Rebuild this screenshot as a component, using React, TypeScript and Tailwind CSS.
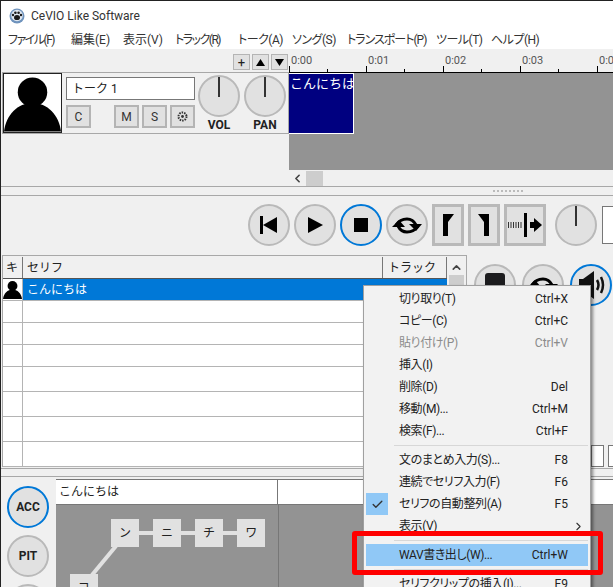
import { ChevronRight, ChevronLeft, ChevronUp, Check } from "lucide-react"
import type { ReactNode } from "react"

const menuBar = [
    { label: "ファイル(F)", width: "w-[63px]", tight: "tracking-[-1.5px]" },
    { label: "編集(E)", width: "w-[52px]", tight: "" },
    { label: "表示(V)", width: "w-[52px]", tight: "" },
    { label: "トラック(R)", width: "w-[63px]", tight: "tracking-[-1.5px]" },
    { label: "トーク(A)", width: "w-[54px]", tight: "tracking-[-0.5px]" },
    { label: "ソング(S)", width: "w-[55px]", tight: "tracking-[-0.5px]" },
    { label: "トランスポート(P)", width: "w-[89px]", tight: "tracking-[-1px]" },
    { label: "ツール(T)", width: "w-[55px]", tight: "tracking-[-0.5px]" },
    { label: "ヘルプ(H)", width: "w-[60px]", tight: "tracking-[-0.5px]" },
]

const rowHeights = ["h-[22px]", "h-[22px]", "h-[22px]", "h-[25px]", "h-[25px]", "h-[25px]", "h-[25px]"]

function Knob() {
    return (
        <div className="flex h-[42px] w-[42px] shrink-0 justify-center rounded-full border-2 border-[#b9b9b9] bg-[#e1e1e1]">
            <div className="h-[20px] w-[2px] bg-[#333]" />
        </div>
    )
}

function RoundButton({ active = false, children }: { active?: boolean; children: ReactNode }) {
    return (
        <div className={`flex h-[42px] w-[42px] shrink-0 items-center justify-center rounded-full border-2 bg-[#e1e1e1] ${active ? 'border-[#0078d7]' : 'border-[#b9b9b9]'}`}>
            {children}
        </div>
    )
}

function LoopIcon() {
    return (
        <svg width="42" height="42" viewBox="0 0 42 42" className="shrink-0">
            <path d="M10 21 Q14 15 21 15 Q27 15 30 21" fill="none" stroke="#000" strokeWidth="3" />
            <polygon points="23,20 36,20 30,27" fill="#000" />
            <path d="M32 22 Q28 28 21 28 Q15 28 12 22" fill="none" stroke="#000" strokeWidth="3" />
            <polygon points="6,23 19,23 13,16" fill="#000" />
        </svg>
    )
}

function SmallButton({ className = "", children }: { className?: string; children: ReactNode }) {
    return (
        <div className={`flex h-[23px] w-[25px] items-center justify-center border-2 border-[#b4b4b4] bg-[#e1e1e1] text-[12px] text-[#333] ${className}`}>
            {children}
        </div>
    )
}

function SquareButton({ className = "w-[32px]", children }: { className?: string; children: ReactNode }) {
    return (
        <div className={`flex h-[42px] shrink-0 items-center justify-center border-[3px] border-[#b9b9b9] bg-[#e1e1e1] ${className}`}>
            {children}
        </div>
    )
}

function MenuItem({ label, keys, disabled = false, highlight = false, checked = false, arrow = false }: { label: string; keys?: string; disabled?: boolean; highlight?: boolean; checked?: boolean; arrow?: boolean }) {
    return (
        <div className={`relative flex h-[22px] shrink-0 items-center justify-between pl-[33px] pr-[20px] text-[12px] ${highlight ? 'bg-[#90c8f6]' : ''} ${disabled ? 'text-[#8b8b8b]' : 'text-[#222]'}`}>
            {checked && (
                <div className="absolute left-0 top-0 flex h-[22px] w-[22px] items-center justify-center bg-[#90c8f6]">
                    <Check size={13} strokeWidth={2.5} className="text-[#333]" />
                </div>
            )}
            <span className="tracking-[-0.4px]">{label}</span>
            {keys && <span>{keys}</span>}
            {arrow && <ChevronRight size={13} className="absolute right-[3px] top-[5px] text-[#333]" />}
        </div>
    )
}

function MenuSeparator() {
    return (
        <div className="flex h-[7px] shrink-0 items-center pl-[28px]">
            <div className="h-[1px] w-full bg-[#d7d7d7]" />
        </div>
    )
}

function Person() {
    return (
        <svg viewBox="0 0 58 58" className="h-full w-full">
            <circle cx="29" cy="18" r="15" fill="#000" />
            <path d="M0 58 C2 41 14 29 29 29 C44 29 56 41 58 58 Z" fill="#000" />
        </svg>
    )
}

export default function App() {
    return (
        <div className="relative flex h-[587px] w-[613px] flex-col overflow-hidden border-l border-t border-[#222] bg-[#f0f0f0] font-['Roboto','Noto_Sans_CJK_JP',sans-serif] text-[#222] [font-feature-settings:'palt']">
            {/* title bar */}
            <div className="flex h-[29px] shrink-0 items-center gap-[6px] bg-white pl-[8px] text-[12px] text-[#333]">
                <svg width="16" height="16" viewBox="0 0 16 16">
                    <circle cx="8" cy="8" r="7.5" fill="#6f93bd" />
                    <circle cx="8" cy="7.5" r="5.8" fill="#dfe7f0" />
                    <ellipse cx="8" cy="9.5" rx="3" ry="2.6" fill="#1b1b1b" />
                    <circle cx="4" cy="7" r="1.2" fill="#1b1b1b" />
                    <circle cx="6.4" cy="4.8" r="1.3" fill="#1b1b1b" />
                    <circle cx="9.6" cy="4.8" r="1.3" fill="#1b1b1b" />
                    <circle cx="12" cy="7" r="1.2" fill="#1b1b1b" />
                </svg>
                <span>CeVIO Like Software</span>
            </div>

            {/* menu bar */}
            <div className="flex h-[19px] shrink-0 items-center bg-white pl-[7px] text-[12px] text-[#333]">
                {menuBar.map(item => (
                    <div key={item.label} className={`shrink-0 whitespace-nowrap ${item.width} ${item.tight}`}>{item.label}</div>
                ))}
            </div>

            {/* timeline */}
            <div className="flex h-[137px] shrink-0">
                <div className="w-[288px] shrink-0">
                    <div className="flex h-[23px] items-start justify-end gap-[2px] pr-[1px] pt-[5px]">
                        <div className="flex h-[16px] w-[17px] items-center justify-center border border-[#b4b4b4] bg-[#e1e1e1] text-[13px] leading-none">+</div>
                        <div className="flex h-[16px] w-[17px] items-center justify-center border border-[#b4b4b4] bg-[#e1e1e1]">
                            <svg width="9" height="7"><polygon points="4.5,0 9,7 0,7" fill="#000" /></svg>
                        </div>
                        <div className="flex h-[16px] w-[17px] items-center justify-center border border-[#b4b4b4] bg-[#e1e1e1]">
                            <svg width="9" height="7"><polygon points="0,0 9,0 4.5,7" fill="#000" /></svg>
                        </div>
                    </div>
                    <div className="ml-[1px] flex h-[62px] w-[287px] border border-[#a8a8a8]">
                        <div className="h-[60px] w-[59px] shrink-0 border border-[#222] bg-white"><Person /></div>
                        <div className="ml-[4px] flex w-[129px] shrink-0 flex-col pt-[4px]">
                            <div className="flex h-[23px] items-center border border-[#777] bg-white pl-[5px] text-[12px] [font-feature-settings:normal]">トーク 1</div>
                            <div className="mt-[5px] flex">
                                <SmallButton>C</SmallButton>
                                <SmallButton className="ml-[23px]">M</SmallButton>
                                <SmallButton className="ml-[3px]">S</SmallButton>
                                <SmallButton className="ml-[3px]">
                                    <svg width="11" height="11" viewBox="0 0 11 11">
                                        <circle cx="5.5" cy="5.5" r="4" fill="none" stroke="#333" strokeWidth="2" strokeDasharray="1.5 1" />
                                        <circle cx="5.5" cy="5.5" r="1.4" fill="#333" />
                                    </svg>
                                </SmallButton>
                            </div>
                        </div>
                        <div className="ml-[3px] mt-[2px] flex flex-col items-center">
                            <Knob />
                            <div className="text-[12px] font-bold leading-[16px]">VOL</div>
                        </div>
                        <div className="ml-[4px] mt-[2px] flex flex-col items-center">
                            <Knob />
                            <div className="text-[12px] font-bold leading-[16px]">PAN</div>
                        </div>
                    </div>
                </div>
                <div className="flex min-w-0 flex-1 flex-col">
                    <div className="relative flex h-[24px] shrink-0 border-b border-black pl-[2px] text-[11px] leading-[23px] text-[#555]">
                        {["0:00", "0:01", "0:02", "0:03", "0:04"].map(time => (
                            <div key={time} className="w-[77px] shrink-0">{time}</div>
                        ))}
                        <svg width="324" height="6" className="absolute bottom-0 left-0">
                            {[0, 77, 154, 231, 308].map(x => <line key={x} x1={x + 0.5} x2={x + 0.5} y1="0" y2="6" stroke="#000" />)}
                            {[38, 115, 192, 269].map(x => <line key={x} x1={x + 0.5} x2={x + 0.5} y1="3" y2="6" stroke="#000" />)}
                        </svg>
                    </div>
                    <div className="h-[97px] shrink-0 bg-[#939393]">
                        <div className="h-[61px] w-[65px] overflow-hidden whitespace-nowrap border border-l-0 border-white bg-[#000080] pl-[1px] text-[13px] leading-[20px] text-white [font-feature-settings:normal]">こんにちは</div>
                    </div>
                    <div className="flex flex-1 items-center bg-[#f0f0f0] pl-[2px]">
                        <ChevronLeft size={13} strokeWidth={3} className="text-[#444]" />
                        <div className="ml-[2px] h-[15px] w-[17px] bg-[#cdcdcd]" />
                    </div>
                </div>
            </div>

            {/* splitter */}
            <div className="flex h-[10px] shrink-0 items-center justify-end border-y border-[#a8a8a8] pr-[90px]">
                <div className="w-[30px] border-t-2 border-dotted border-[#bbb]" />
            </div>

            {/* transport */}
            <div className="flex h-[58px] shrink-0 items-center pl-[247px]">
                <div className="flex items-center gap-[4px]">
                    <RoundButton>
                        <svg width="18" height="18" viewBox="0 0 18 18"><rect x="0" y="0" width="3" height="18" fill="#000" /><polygon points="3,9 17,1 17,17" fill="#000" /></svg>
                    </RoundButton>
                    <RoundButton>
                        <svg width="16" height="16" viewBox="0 0 16 16"><polygon points="1,0 16,8 1,16" fill="#000" /></svg>
                    </RoundButton>
                    <RoundButton active>
                        <div className="h-[14px] w-[14px] bg-black" />
                    </RoundButton>
                    <RoundButton><LoopIcon /></RoundButton>
                    <SquareButton>
                        <svg width="12" height="22" viewBox="0 0 12 22"><polygon points="1,0 12,0 6,8 6,22 1,22" fill="#000" /></svg>
                    </SquareButton>
                    <SquareButton>
                        <svg width="12" height="22" viewBox="0 0 12 22"><polygon points="11,0 0,0 6,8 6,22 11,22" fill="#000" /></svg>
                    </SquareButton>
                    <SquareButton className="w-[42px]">
                        <svg width="36" height="24" viewBox="0 0 36 24">
                            <path d="M1 12 H15" stroke="#333" strokeWidth="6" strokeDasharray="1 1.5" />
                            <rect x="17" y="0" width="3" height="24" fill="#000" />
                            <rect x="23" y="9" width="4" height="6" fill="#000" />
                            <polygon points="27,5 35,12 27,19" fill="#000" />
                        </svg>
                    </SquareButton>
                </div>
                <div className="ml-[9px]"><Knob /></div>
                <div className="ml-[5px] h-[38px] w-[40px] shrink-0 border border-[#777] bg-white" />
            </div>

            {/* list */}
            <div className="mt-[1px] flex h-[212px] shrink-0">
                <div className="ml-[1px] flex h-[212px] w-[465px] shrink-0 border border-[#a8a8a8]">
                    <div className="w-[444px] shrink-0">
                        <div className="flex h-[23px] border-b border-[#555] bg-[#f0f0f0] pt-[1px] text-[12px] leading-[22px] [font-feature-settings:normal]">
                            <div className="w-[20px] border-r border-[#777] pl-[3px]">キ</div>
                            <div className="w-[360px] border-r border-[#777] pl-[4px]">セリフ</div>
                            <div className="flex-1 border-r border-[#777] pl-[5px]">トラック</div>
                        </div>
                        <div className="flex h-[22px] border-b border-[#b4b4b4] bg-white text-[12px] [font-feature-settings:normal]">
                            <div className="h-full w-[20px] shrink-0 border-r border-[#b4b4b4] bg-white"><Person /></div>
                            <div className="flex flex-1 items-center bg-[#0078d7] pl-[4px] pt-[1px] text-white">こんにちは</div>
                        </div>
                        {rowHeights.map((height, i) => (
                            <div key={i} className={`flex border-b border-[#b4b4b4] bg-white ${height}`}>
                                <div className="w-[20px] border-r border-[#b4b4b4]" />
                            </div>
                        ))}
                    </div>
                    <div className="flex flex-1 flex-col items-center pt-[5px]">
                        <ChevronUp size={13} strokeWidth={3} className="text-[#444]" />
                        <div className="mt-[1px] h-[40px] w-[15px] bg-[#cdcdcd]" />
                    </div>
                </div>
                <div className="flex min-w-0 flex-1 flex-col justify-between">
                    <div className="flex gap-[6px] pl-[7px] pt-[9px]">
                        <RoundButton>
                            <div className="h-[24px] w-[20px] rounded-[3px] bg-[#1c1c1e]" />
                        </RoundButton>
                        <RoundButton><LoopIcon /></RoundButton>
                        <RoundButton active>
                            <svg width="38" height="38" viewBox="0 0 38 38">
                                <polygon points="7,13 11,13 22,5 22,33 11,25 7,25" fill="#111" />
                                <path d="M25 14 Q28 19 25 24" fill="none" stroke="#111" strokeWidth="2.5" />
                                <path d="M29 11 Q33 19 29 27" fill="none" stroke="#111" strokeWidth="2.5" />
                            </svg>
                        </RoundButton>
                    </div>
                    <div className="flex gap-[4px] pl-[124px]">
                        <div className="h-[22px] w-[13px] shrink-0 border border-[#777] bg-white" />
                        <div className="h-[22px] w-[13px] shrink-0 border border-[#777] bg-white" />
                    </div>
                </div>
            </div>

            {/* splitter */}
            <div className="mt-[1px] h-[9px] shrink-0 border-y border-[#a8a8a8]" />

            {/* bottom editor */}
            <div className="flex min-h-0 flex-1">
                <div className="flex w-[55px] shrink-0 flex-col items-start gap-[7px] pl-[6px] pt-[9px]">
                    <RoundButton active><span className="text-[12px] font-bold">ACC</span></RoundButton>
                    <RoundButton><span className="text-[12px] font-bold">PIT</span></RoundButton>
                    <RoundButton><span /></RoundButton>
                </div>
                <div className="mt-[2px] flex min-w-0 flex-1 flex-col border-t border-[#777]">
                    <div className="flex h-[25px] shrink-0 border-b border-[#777] bg-white">
                        <div className="flex w-[222px] items-center border-r border-[#777] pl-[3px] text-[12px] [font-feature-settings:normal]">こんにちは</div>
                    </div>
                    <div className="relative flex-1 bg-[#939393]">
                        <div className="absolute bottom-0 left-[222px] top-0 w-[1px] bg-[#777]" />
                        <svg width="222" height="83" className="absolute left-0 top-0">
                            <line x1="55" y1="28" x2="209" y2="28" stroke="#e1e1e1" strokeWidth="4" />
                            <line x1="60" y1="41" x2="36" y2="70" stroke="#e1e1e1" strokeWidth="4" />
                        </svg>
                        {[
                            { text: "ン", pos: "left-[55px] top-[14px]" },
                            { text: "ニ", pos: "left-[97px] top-[14px]" },
                            { text: "チ", pos: "left-[139px] top-[14px]" },
                            { text: "ワ", pos: "left-[181px] top-[14px]" },
                            { text: "コ", pos: "left-[14px] top-[69px]" },
                        ].map(node => (
                            <div key={node.text} className={`absolute flex h-[28px] w-[28px] items-center justify-center bg-[#e1e1e1] text-[12px] ${node.pos}`}>{node.text}</div>
                        ))}
                    </div>
                </div>
            </div>

            {/* context menu */}
            <div className="absolute left-[362px] top-[284px] flex h-[310px] w-[228px] flex-col border border-[#a0a0a0] bg-[#f2f2f2] p-[2px] shadow-[2px_2px_3px_rgba(0,0,0,0.45)]">
                <MenuItem label="切り取り(T)" keys="Ctrl+X" />
                <MenuItem label="コピー(C)" keys="Ctrl+C" />
                <MenuItem label="貼り付け(P)" keys="Ctrl+V" disabled />
                <MenuItem label="挿入(I)" />
                <MenuItem label="削除(D)" keys="Del" />
                <MenuItem label="移動(M)..." keys="Ctrl+M" />
                <MenuItem label="検索(F)..." keys="Ctrl+F" />
                <MenuSeparator />
                <MenuItem label="文のまとめ入力(S)..." keys="F8" />
                <MenuItem label="連続でセリフ入力(F)" keys="F6" />
                <MenuItem label="セリフの自動整列(A)" keys="F5" checked />
                <MenuItem label="表示(V)" arrow />
                <MenuSeparator />
                <MenuItem label="WAV書き出し(W)..." keys="Ctrl+W" highlight />
                <MenuSeparator />
                <MenuItem label="セリフクリップの挿入(I)..." keys="F9" />
            </div>

            {/* red annotation */}
            <div className="absolute left-[351px] top-[530px] h-[44px] w-[251px] rounded-[3px] border-[5px] border-[#ff0000]" />
        </div>
    )
}
